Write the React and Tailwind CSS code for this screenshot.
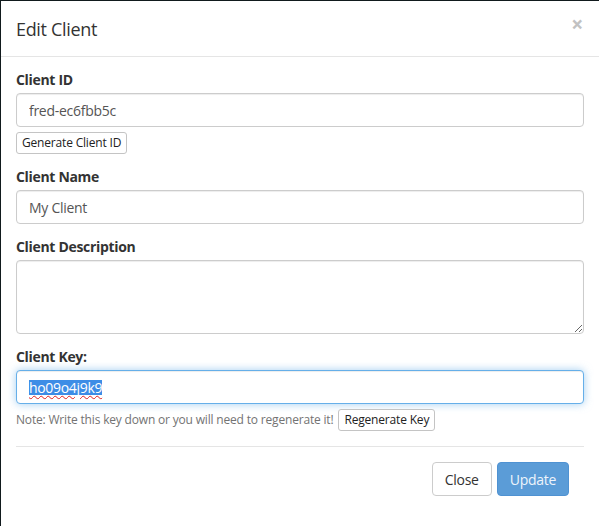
import React from "react";

const inputCls =
  "w-full h-[34px] px-3 rounded-[4px] border border-[#cccccc] bg-white text-[14px] text-[#555555] tracking-[-0.02em] shadow-[inset_0_1px_1px_rgba(0,0,0,0.075)] outline-none";

const smallBtn =
  "h-[22px] px-[5px] rounded-[3px] border border-[#c4c4c4] bg-white text-[12px] leading-none text-[#222222] tracking-[-0.015em]";

const Label = ({ children }) => (
  <label className="block text-[14px] leading-[20px] font-bold text-[#333333] mb-[3px]">
    {children}
  </label>
);

const App = () => {
  return (
    <div className="w-[599px] h-[526px] bg-[#111a1d] pt-px pl-px overflow-hidden">
      <div
        className="h-full bg-white text-[#333333] tracking-[-0.02em]"
        style={{ fontFamily: '"Open Sans", "Noto Sans", sans-serif' }}
      >
        {/* Header */}
        <div className="h-[56px] border-b border-[#e5e5e5] px-[15px] flex items-center justify-between">
          <h4 className="text-[18px] leading-[20px] text-[#333333]">Edit Client</h4>
          <span className="text-[21px] leading-none font-bold text-[#c2c2c2] -mt-[8px] mr-[1px]">×</span>
        </div>

        {/* Body */}
        <div className="px-[15px] pt-[13px]">
          <div>
            <Label>Client ID</Label>
            <input className={inputCls} defaultValue="fred-ec6fbb5c" readOnly />
            <button className={`${smallBtn} mt-[5px]`}>Generate Client ID</button>
          </div>

          <div className="mt-[13px]">
            <Label>Client Name</Label>
            <input className={inputCls} defaultValue="My Client" readOnly />
          </div>

          <div className="mt-[13px]">
            <Label>Client Description</Label>
            <textarea
              className="block w-full h-[74px] px-3 py-[6px] rounded-[4px] border border-[#cccccc] bg-white text-[14px] text-[#555555] shadow-[inset_0_1px_1px_rgba(0,0,0,0.075)] outline-none"
              readOnly
            />
          </div>

          <div className="mt-[13px]">
            <Label>Client Key:</Label>
            <div className="w-full h-[34px] px-3 rounded-[4px] border border-[#66afe9] bg-white text-[14px] text-[#555555] flex items-center shadow-[inset_0_1px_1px_rgba(0,0,0,0.075),0_0_8px_rgba(102,175,233,0.6)]">
              <span className="bg-[#3d8de6] text-white leading-[15px] underline decoration-wavy decoration-[#e02020] decoration-1 underline-offset-[2px]">
                ho09o4j9k9
              </span>
            </div>
            <div className="mt-[5px] flex items-center gap-[5px]">
              <span className="text-[12px] text-[#737373] tracking-[-0.015em]">
                Note: Write this key down or you will need to regenerate it!
              </span>
              <button className={smallBtn}>Regenerate Key</button>
            </div>
          </div>

          <div className="mt-[15px] border-t border-[#e5e5e5]" />

          {/* Footer */}
          <div className="pt-[15px] pr-[15px] flex justify-end gap-[5px]">
            <button className="h-[34px] px-3 rounded-[4px] border border-[#cccccc] bg-white text-[14px] text-[#333333] tracking-[-0.02em]">
              Close
            </button>
            <button className="h-[34px] px-3 rounded-[4px] border border-[#4f92d2] bg-[#5b9cd7] text-[14px] text-[#eef4fb] tracking-[-0.02em]">
              Update
            </button>
          </div>
        </div>
      </div>
    </div>
  );
};

export default App;
